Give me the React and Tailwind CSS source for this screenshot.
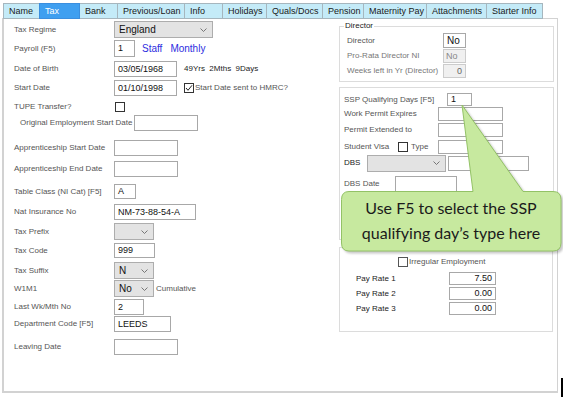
import React from "react";

const Chevron = () => (
  <svg width="7" height="4" viewBox="0 0 7 4" className="shrink-0">
    <polyline points="0.5,0.5 3.5,3.5 6.5,0.5" fill="none" stroke="#6b6b6b" strokeWidth="0.9" />
  </svg>
);

const Box = ({ className = "", children }) => (
  <div className={"flex items-center border border-[#a8a8a8] bg-white px-[3px] text-[9px] text-[#111] leading-none " + className}>
    {children}
  </div>
);

const Select = ({ className = "", children }) => (
  <div className={"flex items-center justify-between border border-[#adadad] bg-[#e3e3e3] pl-[4px] pr-[5px] text-[#111] leading-none " + className}>
    <span>{children}</span>
    <Chevron />
  </div>
);

const Check = ({ checked, className = "" }) => (
  <div className={"w-[10px] h-[10px] border border-[#333] bg-white flex items-center justify-center shrink-0 " + className}>
    {checked && (
      <svg width="8" height="8" viewBox="0 0 8 8">
        <polyline points="1,4 3,6.3 7,1.3" fill="none" stroke="#222" strokeWidth="1" />
      </svg>
    )}
  </div>
);

const Label = ({ className = "", children }) => (
  <span className={"text-[8px] text-[#555] whitespace-nowrap leading-none shrink-0 " + className}>{children}</span>
);

const tabs = [
  ["Name", "w-[37px]"],
  ["Tax", "w-[41px]"],
  ["Bank", "w-[39px]"],
  ["Previous/Loan", "w-[68px]"],
  ["Info", "w-[39px]"],
  ["Holidays", "w-[45px]"],
  ["Quals/Docs", "w-[57px]"],
  ["Pension", "w-[42px]"],
  ["Maternity Pay", "w-[64px]"],
  ["Attachments", "w-[61px]"],
  ["Starter Info", "w-[57px]"],
];

export default function App() {
  return (
    <div className="relative w-[563px] h-[397px] bg-white overflow-hidden font-['Liberation_Sans',Arial,sans-serif]">
      {/* tabs */}
      <div className="flex pl-[3px] pt-[3px]">
        {tabs.map(([t, w]) => (
          <div
            key={t}
            className={
              w +
              " h-[16px] flex items-center pl-[5px] text-[9px] leading-none border -ml-px first:ml-0 " +
              (t === "Tax"
                ? "bg-[#3f9ff0] text-white border-[#3b8ede] relative z-10"
                : "bg-[#c4ebf8] text-[#1a1a1a] border-[#a6b6be]")
            }
          >
            {t}
          </div>
        ))}
      </div>

      {/* panel */}
      <div className="ml-[2px] w-[556px] h-[375px] -mt-px border-t border-r border-b-2 border-l-2 border-[#d2d2d2] flex">
        {/* left column */}
        <div className="w-[335px] pl-[10px] flex flex-col">
          <div className="flex items-center mt-[2px] h-[17px]">
            <Label className="w-[100px]">Tax Regime</Label>
            <Select className="w-[99px] h-[17px] text-[10px]">England</Select>
          </div>
          <div className="flex items-center mt-[2px] h-[17px]">
            <Label className="w-[100px]">Payroll (F5)</Label>
            <Box className="w-[21px] h-[17px]">1</Box>
            <span className="ml-[7px] text-[10px] text-[#2d2de0] leading-none">Staff</span>
            <span className="ml-[8px] text-[10px] text-[#2d2de0] leading-none">Monthly</span>
          </div>
          <div className="flex items-center mt-[4px] h-[16px]">
            <Label className="w-[100px]">Date of Birth</Label>
            <Box className="w-[63px] h-[16px]">03/05/1968</Box>
            <span className="ml-[7px] text-[8px] text-[#222] leading-none">49Yrs&nbsp; 2Mths&nbsp; 9Days</span>
          </div>
          <div className="flex items-center mt-[3px] h-[16px]">
            <Label className="w-[100px]">Start Date</Label>
            <Box className="w-[63px] h-[16px]">01/10/1998</Box>
            <Check checked className="ml-[7px]" />
            <span className="ml-[1px] text-[8px] text-[#555] leading-none">Start Date sent to HMRC?</span>
          </div>
          <div className="flex items-center mt-[5px] h-[12px]">
            <Label className="w-[101px]">TUPE Transfer?</Label>
            <Check />
          </div>
          <div className="flex items-center mt-[2px] h-[16px]">
            <Label className="w-[120px] pl-[6px]">Original Employment Start Date</Label>
            <Box className="w-[64px] h-[16px]" />
          </div>
          <div className="flex items-center mt-[9px] h-[16px]">
            <Label className="w-[100px]">Apprenticeship Start Date</Label>
            <Box className="w-[64px] h-[16px]" />
          </div>
          <div className="flex items-center mt-[5px] h-[16px]">
            <Label className="w-[100px]">Apprenticeship End Date</Label>
            <Box className="w-[64px] h-[16px]" />
          </div>
          <div className="flex items-center mt-[7px] h-[15px]">
            <Label className="w-[100px]">Table Class (NI Cat) [F5]</Label>
            <Box className="w-[22px] h-[15px]">A</Box>
          </div>
          <div className="flex items-center mt-[5px] h-[16px]">
            <Label className="w-[100px]">Nat Insurance No</Label>
            <Box className="w-[82px] h-[16px]">NM-73-88-54-A</Box>
          </div>
          <div className="flex items-center mt-[3px] h-[17px]">
            <Label className="w-[100px]">Tax Prefix</Label>
            <Select className="w-[40px] h-[17px] text-[10px]"></Select>
          </div>
          <div className="flex items-center mt-[3px] h-[15px]">
            <Label className="w-[100px]">Tax Code</Label>
            <Box className="w-[41px] h-[15px]">999</Box>
          </div>
          <div className="flex items-center mt-[4px] h-[17px]">
            <Label className="w-[100px]">Tax Suffix</Label>
            <Select className="w-[40px] h-[17px] text-[10px]">N</Select>
          </div>
          <div className="flex items-center mt-[1px] h-[17px]">
            <Label className="w-[100px]">W1M1</Label>
            <Select className="w-[40px] h-[17px] text-[10px]">No</Select>
            <span className="ml-[2px] text-[8px] text-[#555] leading-none">Cumulative</span>
          </div>
          <div className="flex items-center mt-[2px] h-[16px]">
            <Label className="w-[100px]">Last Wk/Mth No</Label>
            <Box className="w-[30px] h-[16px]">2</Box>
          </div>
          <div className="flex items-center mt-[1px] h-[16px]">
            <Label className="w-[100px]">Department Code [F5]</Label>
            <Box className="w-[57px] h-[16px]">LEEDS</Box>
          </div>
          <div className="flex items-center mt-[7px] h-[16px]">
            <Label className="w-[100px]">Leaving Date</Label>
            <Box className="w-[64px] h-[16px]" />
          </div>
        </div>

        {/* right column */}
        <div className="w-[215px] flex flex-col">
          <fieldset className="mt-[2px] border border-[#dcdcdc] pb-[3px]">
            <legend className="ml-[4px] px-[1px] text-[8px] leading-[10px] text-[#222]">Director</legend>
            <div className="flex flex-col pl-[7px]">
              <div className="flex items-center mt-[2px] h-[15px]">
                <Label className="w-[96px]">Director</Label>
                <Box className="w-[23px] h-[15px] text-[10px]">No</Box>
              </div>
              <div className="flex items-center mt-[1px] h-[14px]">
                <Label className="w-[96px] text-[#777]">Pro-Rata Director NI</Label>
                <div className="w-[23px] h-[14px] border border-[#cccccc] bg-[#f0f0f0] flex items-center px-[2px] text-[9px] text-[#888] leading-none">No</div>
              </div>
              <div className="flex items-center mt-[1px] h-[14px]">
                <Label className="w-[96px] text-[#777]">Weeks left in Yr (Director)</Label>
                <div className="w-[23px] h-[14px] border border-[#cccccc] bg-[#f0f0f0] flex items-center justify-end px-[3px] text-[9px] text-[#666] leading-none">0</div>
              </div>
            </div>
          </fieldset>

          <div className="mt-[5px] h-[153px] border border-[#dcdcdc] pl-[4px] flex flex-col">
            <div className="flex items-center mt-[5px] h-[13px]">
              <Label className="w-[103px]">SSP Qualifying Days [F5]</Label>
              <Box className="w-[25px] h-[13px]">1</Box>
            </div>
            <div className="flex items-center mt-[1px] h-[14px]">
              <Label className="w-[94px]">Work Permit Expires</Label>
              <Box className="w-[65px] h-[14px]" />
            </div>
            <div className="flex items-center mt-[2px] h-[14px]">
              <Label className="w-[94px]">Permit Extended to</Label>
              <Box className="w-[65px] h-[14px]" />
            </div>
            <div className="flex items-center mt-[3px] h-[14px]">
              <Label className="w-[54px]">Student Visa</Label>
              <Check />
              <Label className="ml-[3px] w-[27px]">Type</Label>
              <Box className="w-[65px] h-[14px]" />
            </div>
            <div className="flex items-center mt-[0px] h-[18px]">
              <span className="w-[23px] text-[8px] text-[#222] leading-none">DBS</span>
              <Select className="w-[79px] h-[17px] text-[9px]"></Select>
              <Box className="ml-[2px] w-[81px] h-[15px]" />
            </div>
            <div className="flex items-center mt-[4px] h-[16px]">
              <Label className="w-[51px]">DBS Date</Label>
              <Box className="w-[62px] h-[16px]" />
            </div>
          </div>

          <fieldset className="mt-[2px] w-[214px] border border-[#dcdcdc] pb-[16px]">
            <legend className="ml-[4px] px-[1px] text-[8px] leading-[10px] text-[#444]">Hourly Rates</legend>
            <div className="flex items-center mt-[5px] h-[10px] pl-[58px]">
              <Check className="border-[#555]" />
              <span className="ml-[1px] text-[8px] text-[#555] leading-none">Irregular Employment</span>
            </div>
            <div className="flex flex-col pl-[16px]">
              <div className="flex items-center mt-[5px] h-[13px]">
                <span className="w-[93px] text-[8px] text-[#222] leading-none">Pay Rate 1</span>
                <Box className="w-[47px] h-[13px] justify-end">7.50</Box>
              </div>
              <div className="flex items-center mt-[2px] h-[13px]">
                <span className="w-[93px] text-[8px] text-[#222] leading-none">Pay Rate 2</span>
                <Box className="w-[47px] h-[13px] justify-end">0.00</Box>
              </div>
              <div className="flex items-center mt-[2px] h-[13px]">
                <span className="w-[93px] text-[8px] text-[#222] leading-none">Pay Rate 3</span>
                <Box className="w-[47px] h-[13px] justify-end">0.00</Box>
              </div>
            </div>
          </fieldset>
        </div>
      </div>

      {/* callout overlay */}
      <svg
        className="absolute left-0 top-0 pointer-events-none drop-shadow-[2px_2px_1px_rgba(0,0,0,0.22)]"
        width="563"
        height="397"
        viewBox="0 0 563 397"
      >
        <path
          d="M 349 191.5 L 473 191.5 L 462 105 L 523 191.5 L 553 191.5 Q 561 191.5 561 199.5 L 561 243 Q 561 251 553 251 L 349 251 Q 341.5 251 341.5 243 L 341.5 199.5 Q 341.5 191.5 349 191.5 Z"
          fill="#c7e99f"
          stroke="#93c266"
          strokeWidth="1"
        />
      </svg>
      <div className="absolute left-[341px] top-[192px] w-[220px] h-[59px] pb-[4px] flex flex-col items-center justify-center text-[16px] leading-[25px] text-[#1b1b1b] font-['Lato',sans-serif]">
        <span>Use F5 to select the SSP</span>
        <span>qualifying day’s type here</span>
      </div>

      {/* window edge artifact */}
      <div className="absolute left-[561px] top-[378px] w-[2px] h-[19px] bg-black" />
    </div>
  );
}
